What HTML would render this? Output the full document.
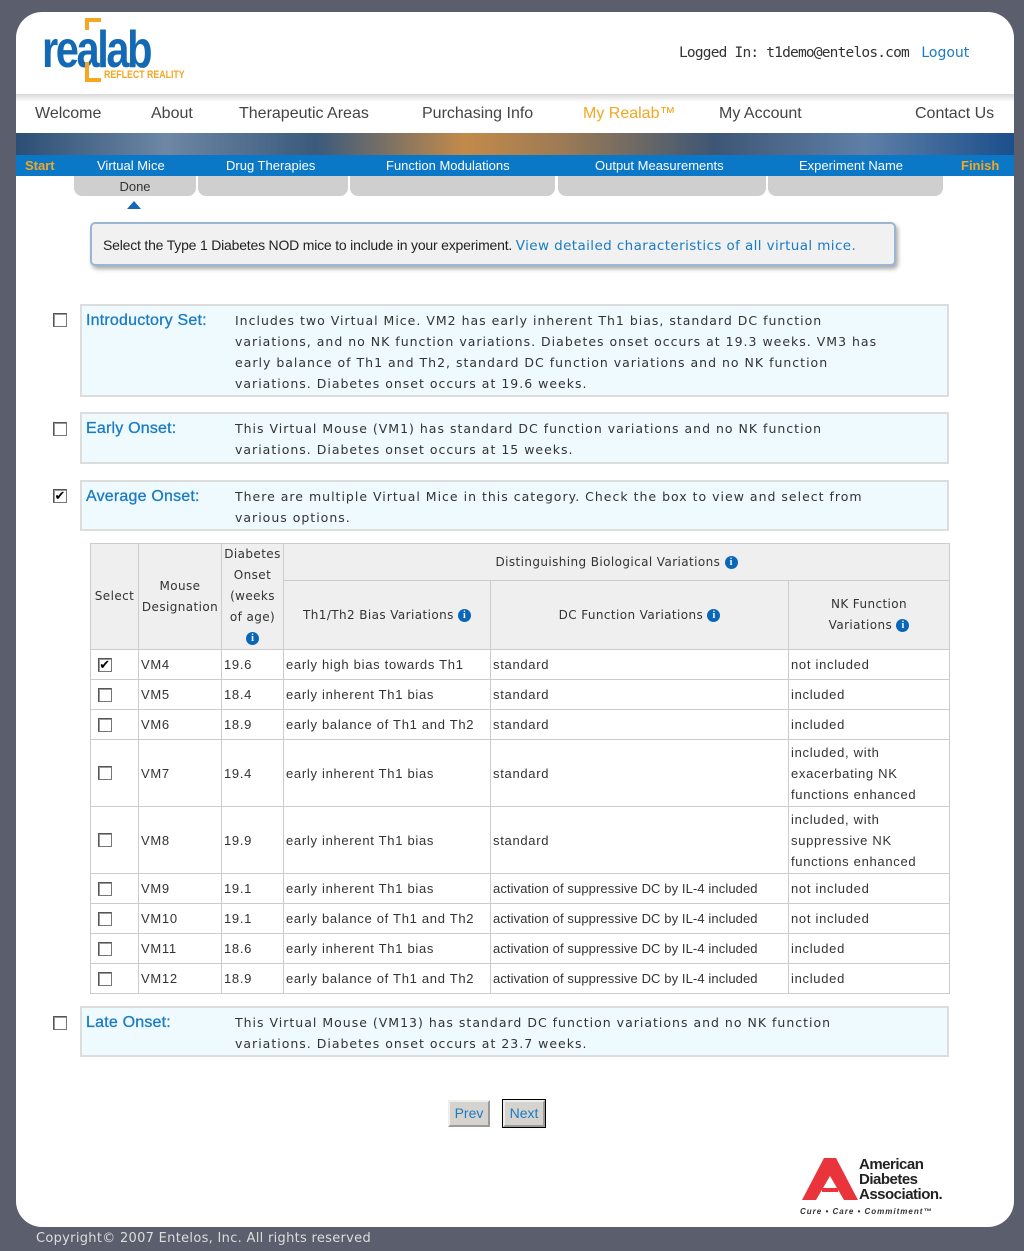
<!DOCTYPE html>
<html><head><meta charset="utf-8"><style>
*{box-sizing:border-box;margin:0;padding:0}
body{width:1024px;height:1251px;background:#5b5e6d;position:relative;font-family:"Liberation Sans",Arial,sans-serif;overflow:hidden}
.a{position:absolute}
#panel{left:16px;top:12px;width:998px;height:1215px;background:#fff;border-radius:26px}
.nav{left:16px;top:94px;width:998px;height:40px;background:linear-gradient(#d8d8d8,#fff 8px,#fff);font-size:16px;color:#444}
.nav span{position:absolute;top:11px}
.banner{left:16px;top:133px;width:998px;height:22px;background:linear-gradient(90deg,#2c4e74 0%,#6d87a4 15%,#3a5a7c 30%,#c38a4a 45%,#9b7a55 55%,#3d5675 70%,#5f7fa6 85%,#1b4f8c 100%)}
.steps{left:16px;top:155px;width:998px;height:21px;background:#0a78c6;font-size:13px;color:#fff}
.steps span{position:absolute;top:3px}
.tabs{top:176px;height:20px;background:#cfcfcf;border-radius:0 0 8px 8px}
.v{font-family:"DejaVu Sans",Verdana,sans-serif;font-size:12.5px;color:#333;letter-spacing:1px;line-height:21px}
.box{left:80px;width:869px;background:#effafe;border:2px solid #ddd}
.box .lbl{position:absolute;left:4px;top:6px;color:#1a7bc4;font-size:16px;letter-spacing:.2px;-webkit-text-stroke:.3px #1a7bc4}
.box .txt{position:absolute;left:153px;top:4px;width:660px}
.cb{width:14px;height:14px;border:1px solid #777;border-top-color:#555;border-left-color:#555;background:#fff;box-shadow:inset 1px 1px 0 #999;font-size:13px;line-height:12px;text-align:center;color:#000}
table{border-collapse:collapse;position:absolute;left:90px;top:543px;width:860px;font-size:13px;color:#333;letter-spacing:.7px}
td,th{border:1px solid #ccc;padding:0 2px}
th{background:#efefef;font-weight:normal;font-family:"DejaVu Sans",Verdana,sans-serif;font-size:12px;color:#333;line-height:21px;letter-spacing:.4px}
td{height:30px}
.i{display:inline-block;width:13px;height:13px;border-radius:50%;background:#0a66b8;color:#fff;font:bold 10px/13px "Liberation Serif",serif;text-align:center;vertical-align:1px;letter-spacing:0}
.btn{top:1100px;height:27px;background:#d6d3ce;border:2px outset #eee;color:#1a7bc4;font-size:14px;text-align:center;line-height:22px}
</style></head><body>
<div id="panel" class="a"></div>
<div class="a" style="left:42px;top:20px;font:bold 52px/60px 'Liberation Sans Narrow','Liberation Sans',sans-serif;color:#1369b3;letter-spacing:-3px;transform:scaleX(.8);transform-origin:left">realab</div>
<div class="a" style="left:85px;top:18px;width:16px;height:12px;border:4px solid #f5a623;border-bottom:none;border-right:none"></div>
<div class="a" style="left:85px;top:62px;width:16px;height:20px;border:4px solid #f5a623;border-top:none;border-right:none"></div>
<div class="a" style="left:104px;top:69px;font:bold 11px 'Liberation Sans Narrow',sans-serif;color:#f5a623;transform:scaleX(.8);transform-origin:left">REFLECT REALITY</div>
<div class="a" style="left:679px;top:45px;font:14.5px 'DejaVu Sans Mono','Liberation Mono',monospace;color:#333;letter-spacing:-.8px">Logged In: t1demo@entelos.com <span style="color:#1a7bc4;font-family:'DejaVu Sans';font-size:14px;letter-spacing:0">&nbsp;Logout</span></div>
<div class="a nav"><span style="left:19px">Welcome</span><span style="left:135px">About</span><span style="left:223px">Therapeutic Areas</span><span style="left:406px">Purchasing Info</span><span style="left:567px;color:#f5a623">My Realab™</span><span style="left:703px">My Account</span><span style="left:899px">Contact Us</span></div>
<div class="a banner"></div>
<div class="a steps"><span style="left:9px;color:#f5a623;font-weight:bold">Start</span><span style="left:81px">Virtual Mice</span><span style="left:210px">Drug Therapies</span><span style="left:370px">Function Modulations</span><span style="left:579px">Output Measurements</span><span style="left:783px">Experiment Name</span><span style="left:945px;color:#f5a623;font-weight:bold">Finish</span></div>
<div class="a tabs" style="left:74px;width:122px;font-size:13px;color:#333;text-align:center;line-height:21px">Done</div>
<div class="a tabs" style="left:198px;width:150px"></div>
<div class="a tabs" style="left:350px;width:205px"></div>
<div class="a tabs" style="left:558px;width:208px"></div>
<div class="a tabs" style="left:768px;width:175px"></div>
<div class="a" style="left:127px;top:201px;width:0;height:0;border-left:7px solid transparent;border-right:7px solid transparent;border-bottom:8px solid #1369b3"></div>
<div class="a" style="left:90px;top:222px;width:806px;height:44px;background:#f1f1f1;border:2px solid #9bb6d0;border-radius:5px;box-shadow:2px 3px 4px #aaa;font-size:14px;color:#222;padding:13px 0 0 11px;letter-spacing:-.2px">Select the Type 1 Diabetes NOD mice to include in your experiment. <span style="color:#1a7bc4;font-family:'DejaVu Sans';font-size:13.5px;letter-spacing:.4px">View detailed characteristics of all virtual mice.</span></div>

<div class="a cb" style="left:53px;top:313px"></div>
<div class="a box" style="top:304px;height:93px"><div class="lbl">Introductory Set:</div><div class="txt v">Includes two Virtual Mice. VM2 has early inherent Th1 bias, standard DC function variations, and no NK function variations. Diabetes onset occurs at 19.3 weeks. VM3 has early balance of Th1 and Th2, standard DC function variations and no NK function variations. Diabetes onset occurs at 19.6 weeks.</div></div>
<div class="a cb" style="left:53px;top:422px"></div>
<div class="a box" style="top:412px;height:52px"><div class="lbl">Early Onset:</div><div class="txt v">This Virtual Mouse (VM1) has standard DC function variations and no NK function variations. Diabetes onset occurs at 15 weeks.</div></div>
<div class="a cb" style="left:53px;top:489px">✔</div>
<div class="a box" style="top:480px;height:51px"><div class="lbl">Average Onset:</div><div class="txt v">There are multiple Virtual Mice in this category. Check the box to view and select from various options.</div></div>

<table>
<colgroup><col style="width:48px"><col style="width:83px"><col style="width:62px"><col style="width:207px"><col style="width:298px"><col style="width:161px"></colgroup>
<tr style="height:37px"><th rowspan="2">Select</th><th rowspan="2">Mouse Designation</th><th rowspan="2">Diabetes Onset (weeks of age) <span class="i">i</span></th><th colspan="3">Distinguishing Biological Variations <span class="i">i</span></th></tr>
<tr style="height:69px"><th>Th1/Th2 Bias Variations <span class="i">i</span></th><th>DC Function Variations <span class="i">i</span></th><th>NK Function<br>Variations <span class="i">i</span></th></tr>
<tr><td><div class="cb" style="margin-left:5px">✔</div></td><td>VM4</td><td>19.6</td><td>early high bias towards Th1</td><td>standard</td><td>not included</td></tr>
<tr><td><div class="cb" style="margin-left:5px"></div></td><td>VM5</td><td>18.4</td><td>early inherent Th1 bias</td><td>standard</td><td>included</td></tr>
<tr><td><div class="cb" style="margin-left:5px"></div></td><td>VM6</td><td>18.9</td><td>early balance of Th1 and Th2</td><td>standard</td><td>included</td></tr>
<tr style="height:67px"><td><div class="cb" style="margin-left:5px"></div></td><td>VM7</td><td>19.4</td><td>early inherent Th1 bias</td><td>standard</td><td style="line-height:21px">included, with<br>exacerbating NK<br>functions enhanced</td></tr>
<tr style="height:67px"><td><div class="cb" style="margin-left:5px"></div></td><td>VM8</td><td>19.9</td><td>early inherent Th1 bias</td><td>standard</td><td style="line-height:21px">included, with<br>suppressive NK<br>functions enhanced</td></tr>
<tr><td><div class="cb" style="margin-left:5px"></div></td><td>VM9</td><td>19.1</td><td>early inherent Th1 bias</td><td style="letter-spacing:.1px">activation of suppressive DC by IL-4 included</td><td>not included</td></tr>
<tr><td><div class="cb" style="margin-left:5px"></div></td><td>VM10</td><td>19.1</td><td>early balance of Th1 and Th2</td><td style="letter-spacing:.1px">activation of suppressive DC by IL-4 included</td><td>not included</td></tr>
<tr><td><div class="cb" style="margin-left:5px"></div></td><td>VM11</td><td>18.6</td><td>early inherent Th1 bias</td><td style="letter-spacing:.1px">activation of suppressive DC by IL-4 included</td><td>included</td></tr>
<tr><td><div class="cb" style="margin-left:5px"></div></td><td>VM12</td><td>18.9</td><td>early balance of Th1 and Th2</td><td style="letter-spacing:.1px">activation of suppressive DC by IL-4 included</td><td>included</td></tr>
</table>

<div class="a cb" style="left:53px;top:1016px"></div>
<div class="a box" style="top:1006px;height:51px"><div class="lbl">Late Onset:</div><div class="txt v">This Virtual Mouse (VM13) has standard DC function variations and no NK function variations. Diabetes onset occurs at 23.7 weeks.</div></div>

<div class="a btn" style="left:448px;width:42px">Prev</div>
<div class="a btn" style="left:503px;width:42px;outline:1px solid #000">Next</div>

<svg class="a" style="left:802px;top:1158px" width="56" height="42"><polygon points="22,0 34,0 56,42 42,42 28,18 14,42 0,42" fill="#e8343a"/><rect x="20" y="30" width="16" height="4" fill="#e8343a"/></svg>
<div class="a" style="left:859px;top:1157px;font:bold 15px/15px 'Liberation Sans',sans-serif;color:#222;letter-spacing:-.5px">American<br>Diabetes<br>Association.</div>
<div class="a" style="left:800px;top:1207px;font:italic bold 8px 'Liberation Sans',sans-serif;color:#333;letter-spacing:1px">Cure • Care • Commitment™</div>
<div class="a" style="left:36px;top:1231px;font:13px 'DejaVu Sans',sans-serif;color:#ddd;letter-spacing:.3px">Copyright© 2007 Entelos, Inc. All rights reserved</div>
</body></html>
